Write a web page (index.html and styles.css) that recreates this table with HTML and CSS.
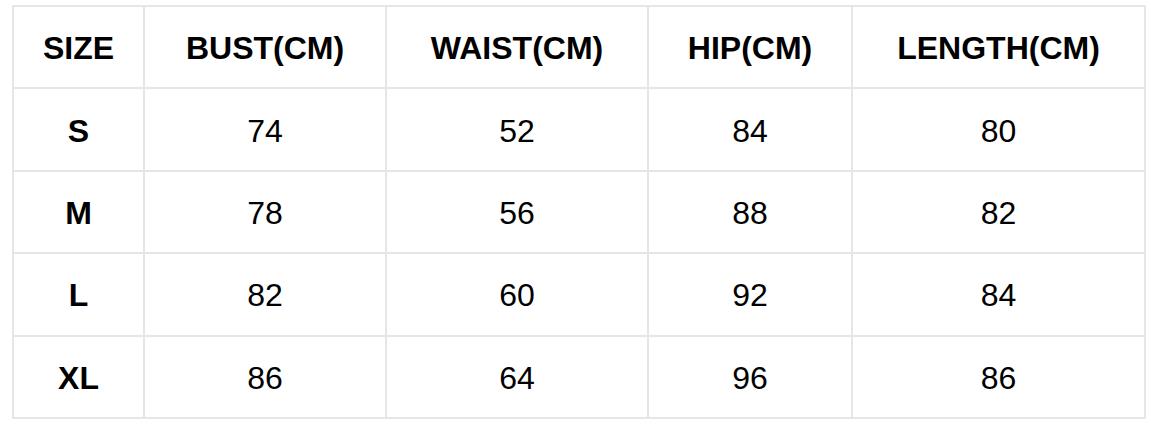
FILE: index.html
```html
<!DOCTYPE html>
<html>
<head>
<meta charset="utf-8">
<link rel="stylesheet" href="styles.css">
</head>
<body>
<div class="size-table">
  <div class="cell head">SIZE</div>
  <div class="cell head">BUST(CM)</div>
  <div class="cell head">WAIST(CM)</div>
  <div class="cell head">HIP(CM)</div>
  <div class="cell head">LENGTH(CM)</div>

  <div class="cell head">S</div>
  <div class="cell">74</div>
  <div class="cell">52</div>
  <div class="cell">84</div>
  <div class="cell">80</div>

  <div class="cell head">M</div>
  <div class="cell">78</div>
  <div class="cell">56</div>
  <div class="cell">88</div>
  <div class="cell">82</div>

  <div class="cell head">L</div>
  <div class="cell">82</div>
  <div class="cell">60</div>
  <div class="cell">92</div>
  <div class="cell">84</div>

  <div class="cell head">XL</div>
  <div class="cell">86</div>
  <div class="cell">64</div>
  <div class="cell">96</div>
  <div class="cell">86</div>
</div>
</body>
</html>
```
FILE: styles.css
```css
html, body {
  margin: 0;
  padding: 0;
  background: #ffffff;
}
body {
  padding: 5px 0 0 12px;
  font-family: "Liberation Sans", Arial, sans-serif;
  color: #000;
}
.size-table {
  display: grid;
  grid-template-columns: 129px 240px 260px 202px 291px;
  grid-template-rows: repeat(5, 1fr);
  gap: 2px;
  padding: 2px;
  width: 1134px;
  height: 414px;
  box-sizing: border-box;
  background: #e6e6e6;
}
.cell {
  background: #fff;
  display: flex;
  align-items: center;
  justify-content: center;
  font-size: 32px;
  padding-top: 3px;
  box-sizing: border-box;
}
.head {
  font-weight: 700;
}
```
